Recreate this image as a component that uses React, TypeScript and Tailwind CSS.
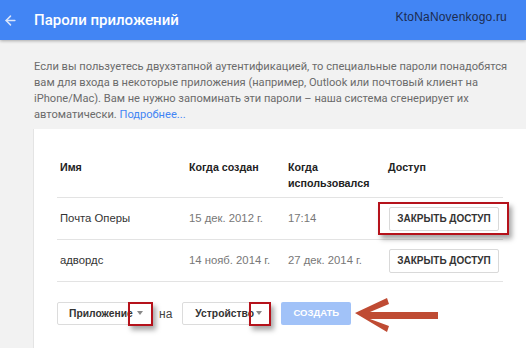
import { ArrowLeft } from "lucide-react";

const rows = [
  { name: "Почта Оперы", created: "15 дек. 2012 г.", used: "17:14", marked: true },
  { name: "адвордс", created: "14 нояб. 2014 г.", used: "27 дек. 2014 г.", marked: false },
];

const Caret = () => (
  <span className="inline-block w-0 h-0 border-l-[3px] border-r-[3px] border-t-[4px] border-l-transparent border-r-transparent border-t-[#888]" />
);

const App = () => {
  return (
    <div className="w-[526px] h-[348px] overflow-hidden bg-[#f2f2f2] font-['Roboto',sans-serif] relative">
      <header className="h-10 bg-[#4285f4] flex items-center relative z-10 shadow-[0_1px_3px_rgba(0,0,0,0.3)]">
        <div className="w-[34px] flex items-center pl-[3px]">
          <ArrowLeft size={15} strokeWidth={2.4} className="text-[#dbe6fb]" />
        </div>
        <h1 className="text-[15px] font-medium text-white">Пароли приложений</h1>
        <span className="ml-auto mr-[19px] -mt-[7px] text-[12px] tracking-[0.2px] text-[#1c2b4f] font-['Liberation_Sans',sans-serif]">
          KtoNaNovenkogo.ru
        </span>
      </header>

      <div className="pl-[34px] pt-[19px]">
        <p className="text-[11.1px] leading-4 text-[#6b6b6b] whitespace-nowrap">
          Если вы пользуетесь двухэтапной аутентификацией, то специальные пароли понадобятся
          <br />
          вам для входа в некоторые приложения (например, Outlook или почтовый клиент на
          <br />
          iPhone/Mac). Вам не нужно запоминать эти пароли – наша система сгенерирует их
          <br />
          автоматически. <span className="text-[#4285f4]">Подробнее...</span>
        </p>
      </div>

      <div className="mt-[6px] ml-[33px] bg-white border-l border-[#e4e4e4] pl-[23px] pr-[23px] h-[230px] font-['Liberation_Sans',sans-serif]">
        <div className="grid grid-cols-[129px_99px_100px_118px] border-b border-[#e3e3e3] pt-[30px] pb-[6px] text-[10.7px] leading-4 font-bold text-[#222]">
          <div className="pl-[3px]">Имя</div>
          <div className="pl-[3px]">Когда создан</div>
          <div className="pl-[3px]">Когда<br />использовался</div>
          <div className="pl-[3px]">Доступ</div>
        </div>
        {rows.map((r) => (
          <div
            key={r.name}
            className="grid grid-cols-[129px_99px_100px_118px] items-center h-[42px] border-b border-[#e3e3e3] text-[11.3px]"
          >
            <div className="pl-[3px] text-[#333]">{r.name}</div>
            <div className="pl-[3px] text-[#777]">{r.created}</div>
            <div className="pl-[3px] text-[#777]">{r.used}</div>
            <div className="pl-[4px] relative">
              <button className="w-[110px] h-[24px] border border-[#d9d9d9] rounded-[2px] bg-white text-[10px] font-bold text-[#333]">
                ЗАКРЫТЬ ДОСТУП
              </button>
              {r.marked && (
                <div className="absolute left-[-7px] top-[-5px] w-[131px] h-[33px] border-2 border-[#b5121b] shadow-[3px_4px_5px_rgba(0,0,0,0.35)]" />
              )}
            </div>
          </div>
        ))}
        <div className="flex items-center pt-[20px] text-[10.3px]">
          <div className="relative w-[95px] h-[23px] border border-[#dcdcdc] rounded-[2px] flex items-center pl-[11px] font-bold text-[#333]">
            Приложение
            <span className="absolute left-[79px] top-[8px] flex"><Caret /></span>
            <div className="absolute left-[70px] top-[-1px] w-[25px] h-[24px] border-2 border-[#b5121b] shadow-[3px_4px_5px_rgba(0,0,0,0.35)]" />
          </div>
          <span className="ml-[7px] mr-[10px] text-[12px] text-[#444]">на</span>
          <div className="relative w-[88px] h-[23px] border border-[#dcdcdc] rounded-[2px] flex items-center pl-[12px] font-bold text-[#333]">
            Устройство
            <span className="absolute left-[73px] top-[8px] flex"><Caret /></span>
            <div className="absolute left-[66px] top-[-1px] w-[22px] h-[24px] border-2 border-[#b5121b] shadow-[3px_4px_5px_rgba(0,0,0,0.35)]" />
          </div>
          <button className="ml-[11px] w-[70px] h-[23px] rounded-[2px] bg-[#a1c2f8] text-white text-[9.5px] font-bold">
            СОЗДАТЬ
          </button>
        </div>
      </div>

      <svg className="absolute left-[352px] top-[295px]" width="90" height="40" viewBox="0 0 90 40">
        <path
          d="M3 18 L35 3 L37 9 L18 17 L86 17 L86 24 L18 24 L37 31 L35 37 Z"
          fill="#bf4b33"
        />
      </svg>
    </div>
  );
};

export default App;
